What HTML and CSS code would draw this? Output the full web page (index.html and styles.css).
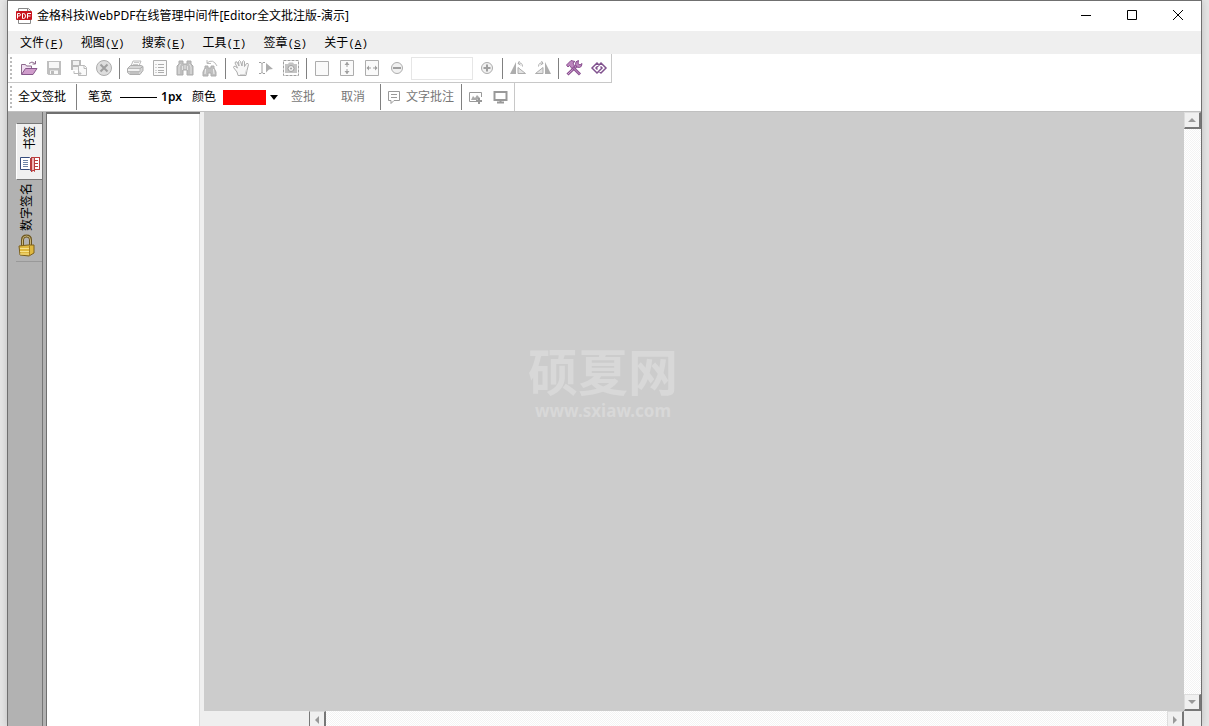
FILE: index.html
```html
<!DOCTYPE html>
<html lang="zh-CN">
<head>
<meta charset="utf-8">
<title>金格科技iWebPDF在线管理中间件</title>
<link rel="stylesheet" href="styles.css">
</head>
<body>
<div class="window">
  <header class="titlebar">
    <svg class="app-icon" viewBox="0 0 16 16"><path d="M2.500 .5h10l2 2v13h-12z" fill="#fff" stroke="#888"/><path d="M11.500.500v3h3" fill="#ddd" stroke="#888"/><rect x="0" y="3" width="16" height="9" rx="1" fill="#c8141e"/><path d="M1.500 10.500V5.500h1.500q1.500 0 1.500 1.250T3 8H1.500M6.500 5.500v5h1q2 0 2-2.500T7.500 5.500zM11.500 10.500v-5h3.500M11.500 8h3" fill="none" stroke="#fff"/></svg>
    <h1 class="title">金格科技iWebPDF在线管理中间件[Editor全文批注版-演示]</h1>
    <div class="caption">
      <button class="cap" aria-label="最小化"><svg viewBox="0 0 12 12"><path d="M1 5.500h10"/></svg></button>
      <button class="cap" aria-label="最大化"><svg viewBox="0 0 12 12"><path d="M1.500 .500h9v9h-9z"/></svg></button>
      <button class="cap" aria-label="关闭"><svg viewBox="0 0 12 12"><path d="M1 0l10 10M11 0L1 10"/></svg></button>
    </div>
  </header>

  <nav class="menubar">
    <button class="menu">文件<span class="key">(<u>F</u>)</span></button>
    <button class="menu">视图<span class="key">(<u>V</u>)</span></button>
    <button class="menu">搜索<span class="key">(<u>E</u>)</span></button>
    <button class="menu">工具<span class="key">(<u>T</u>)</span></button>
    <button class="menu">签章<span class="key">(<u>S</u>)</span></button>
    <button class="menu">关于<span class="key">(<u>A</u>)</span></button>
  </nav>

  <div class="toolbars">
    <div class="toolbar">
      <span class="grip"></span>
      <button class="tool" aria-label="打开"><svg viewBox="0 0 18 18"><path d="M1.500 15V5.500h4l1 1.500h5v2" fill="#f1dff1" stroke="#8c6a8c"/><path d="M1.500 15.500l4-6H17l-4 6z" fill="#cf9ccb" stroke="#86588a"/><path d="M9 4.500q3-3 6 0M15.500 2v3h-3" fill="none" stroke="#8c6a8c"/></svg></button>
      <button class="tool off" aria-label="保存"><svg viewBox="0 0 18 18"><path d="M2 2h14v14H3.500L2 14.500z" fill="#b0b0b0"/><path d="M4 3h10v6H4zM5 11.500h8V15H5z" fill="#f6f6f6"/><path d="M6 12h3v3H6z" fill="#aaa"/></svg></button>
      <button class="tool off" aria-label="另存为"><svg viewBox="0 0 18 18"><path d="M1 1h10v10H1z" fill="#aaa"/><path d="M3 2h6v4H3zM3 8h5v3H3z" fill="#eee"/><path d="M8.500 6.500h6l2 2v8h-8z" fill="#fafafa" stroke="#aaa"/><path d="M4 12v2.500h7M9 12.500l2 2-2 2M14 6.500v3h3" fill="none" stroke="#aaa"/></svg></button>
      <button class="tool off" aria-label="关闭文档"><svg viewBox="0 0 18 18"><circle cx="9" cy="9" r="7.500" fill="#d6d6d6" stroke="#999"/><path d="M5.500 5.500l7 7M12.500 5.500l-7 7" stroke="#888" stroke-width="2"/></svg></button>
      <span class="sep"></span>
      <button class="tool off" aria-label="打印"><svg viewBox="0 0 18 18"><path d="M5 7l2-5h8l-2 5z" fill="#fafafa" stroke="#aaa"/><path d="M8 3.500h5M7 5.500h5" stroke="#bbb"/><path d="M1.500 9.500l3-3h10.500l2 1v4l-3 4H4l-2.500-2z" fill="#ccc" stroke="#999"/><path d="M2 9.500h12v3H2" fill="#eee" stroke="#aaa"/><path d="M4 14h9M14 9.500l3-2" stroke="#999"/></svg></button>
      <button class="tool off" aria-label="文档属性"><svg viewBox="0 0 18 18"><path d="M2.500 1.500h13v15h-13z" fill="#fafafa" stroke="#999"/><path d="M7 5.500h6M7 8.500h6M7 11.500h6M7 13.500h6M4.500 5.500h1M4.500 8.500h1M4.500 11.500h1M4.500 13.500h1" stroke="#999"/></svg></button>
      <button class="tool off" aria-label="查找"><svg viewBox="0 0 18 18"><path d="M3 2h4v3h4V2h4v3l2 2v9h-6v-5H7v5H1V7l2-2z" fill="#b0b0b0" stroke="#999"/><path d="M4.500 5L3 8v7M13.500 5L15 8v7M9 6v4M6.500 7v4M11.500 7v4" fill="none" stroke="#ddd"/></svg></button>
      <button class="tool off" aria-label="查找下一个"><svg viewBox="0 0 18 18"><path d="M4 7h3v2h3V7h3v2l2 4v4h-5v-3H7v3H2v-4l2-4z" fill="#b0b0b0" stroke="#999"/><path d="M4.500 10L4 15M12.500 10l.5 5" stroke="#eee"/><path d="M6 4q6-5 10 3M6 1v3.500h4" fill="none" stroke="#aaa"/></svg></button>
      <span class="sep"></span>
      <button class="tool off" aria-label="手形工具"><svg viewBox="0 0 18 18"><path d="M6 16.500L5 13 1.500 8.500q0-2 2-1L5.500 9 3 4q.500-2 2-1l2 4L6.500 2.500q1-2 2 0L10 7l.500-4.500q1-1.500 2 0v5l2-3q2-.500 2 1l-1.500 6-1 5z" fill="#f6f6f6" stroke="#999"/><path d="M8 15.500h5l1.500-5" fill="none" stroke="#ccc"/></svg></button>
      <button class="tool off" aria-label="选择文本"><svg viewBox="0 0 18 18"><path d="M2 3.500h2l1 1 1-1h2M5 4v10M2 14.500h2l1-1 1 1h2" fill="none" stroke="#888"/><path d="M9 4l7 6-4 .500L9 13.500z" fill="#999"/></svg></button>
      <button class="tool off" aria-label="快照"><svg viewBox="0 0 18 18"><path d="M1.500 1.500h15v15h-15z" fill="none" stroke="#888" stroke-dasharray="3 1"/><path d="M3 5h3l1-1.500h4L12 5h3v9H3z" fill="#b6b6b6"/><circle cx="9" cy="9.500" r="3" fill="#eee" stroke="#888"/><circle cx="9" cy="9.500" r="1" fill="#888"/></svg></button>
      <span class="sep"></span>
      <button class="tool off" aria-label="实际大小"><svg viewBox="0 0 18 18"><path d="M2.500 2.500h13v14h-13z" fill="#fafafa" stroke="#999"/></svg></button>
      <button class="tool off" aria-label="适合高度"><svg viewBox="0 0 18 18"><path d="M2.500 1.500h13v15h-13z" fill="#fafafa" stroke="#999"/><path d="M9 3v5M9 10v5" stroke="#888"/><path d="M6.500 6L9 3l2.500 3zM6.500 12L9 15l2.500-3z" fill="#888"/></svg></button>
      <button class="tool off" aria-label="适合宽度"><svg viewBox="0 0 18 18"><path d="M2.500 1.500h13v15h-13z" fill="#fafafa" stroke="#999"/><path d="M4 9h4M10 9h4" stroke="#888"/><path d="M6 6.500L3.500 9 6 11.500zM12 6.500L14.500 9 12 11.500z" fill="#888"/></svg></button>
      <button class="tool off" aria-label="缩小"><svg viewBox="0 0 18 18"><circle cx="9" cy="9" r="5.500" fill="#eee" stroke="#999"/><path d="M5 9h8" stroke="#888" stroke-width="2"/></svg></button>
      <input class="zoom" type="text" aria-label="缩放比例" disabled>
      <button class="tool off" aria-label="放大"><svg viewBox="0 0 18 18"><circle cx="9" cy="9" r="5.500" fill="#eee" stroke="#999"/><path d="M5.500 9h7M9 5.500v7" stroke="#888" stroke-width="2"/></svg></button>
      <span class="sep"></span>
      <button class="tool off" aria-label="向左旋转"><svg viewBox="0 0 18 18"><path d="M7 3v12H1z" fill="#999"/><path d="M9 8.500v6h7.500z" fill="#ddd" stroke="#999"/><path d="M9 4.500q4-2 4.500 3M10.500 2L9 4.500l2.500 1.500" fill="none" stroke="#999"/></svg></button>
      <button class="tool off" aria-label="向右旋转"><svg viewBox="0 0 18 18"><path d="M11 3v12h6z" fill="#999"/><path d="M9 8.500v6H1.500z" fill="#ddd" stroke="#999"/><path d="M9 4.500q-4-2-4.500 3M7.500 2L9 4.500 6.500 6" fill="none" stroke="#999"/></svg></button>
      <span class="sep"></span>
      <button class="tool" aria-label="选项"><svg viewBox="0 0 18 18"><path d="M2.500 15.500L12 6.500" stroke="#8a5090" stroke-width="3"/><path d="M3 15l9-8.500" stroke="#d3a6d4"/><path d="M13.500 1.500q-3.500.500-3 4t4 3q2.500-.500 2.500-4l-2 1.500-2-1.500z" fill="#bd86be" stroke="#8a5090"/><path d="M7.500 8l7.500 7.500" stroke="#8a5090" stroke-width="3"/><path d="M8 8.500l6.500 6.500" stroke="#c795c8"/><path d="M1.500 6L6 1.500l4 1-2 1.500 1.500 3L7 9.500 4.500 6.500 3 8z" fill="#bd86be" stroke="#8a5090"/></svg></button>
      <button class="tool" aria-label="关于"><svg viewBox="0 0 18 18"><path d="M9.500 6.500L7 4 2 9l5 5 5-5-1.500-1.500M8.500 11.500L11 14l5-5-5-5-5 5 1.500 1.500" fill="none" stroke="#80528e" stroke-width="1.500"/></svg></button>
    </div>

    <div class="toolbar">
      <span class="grip"></span>
      <button class="text-tool full-sign">全文签批</button>
      <span class="sep"></span>
      <button class="text-tool pen"><span>笔宽</span><span class="pen-line"></span><b>1px</b></button>
      <button class="text-tool color"><span>颜色</span><span class="swatch"></span><span class="drop"></span></button>
      <button class="text-tool action" disabled>签批</button>
      <button class="text-tool action" disabled>取消</button>
      <span class="sep"></span>
      <button class="text-tool note" disabled><svg viewBox="0 0 14 14"><path d="M1.500 1.500h11v9H7l-3 3v-3H1.500z" fill="none" stroke="#999"/><path d="M4 4.500h6M4 7.500h6" stroke="#999"/></svg>文字批注</button>
      <span class="sep"></span>
      <button class="tool" aria-label="插入图片"><svg viewBox="0 0 18 18"><path d="M14.500 9V4.500h-12v9H9" fill="none" stroke="#999"/><path d="M4 12l2-4 2 2 2-3 3 3-3 2z" fill="#aaa"/><path d="M12 10v6M9 13h6" stroke="#999" stroke-width="2"/></svg></button>
      <button class="tool" aria-label="全屏"><svg viewBox="0 0 18 18"><path d="M2.500 4h12v8h-12z" fill="#fff" stroke="#999" stroke-width="2"/><path d="M8.500 12v3M5 14.500h7" stroke="#999" stroke-width="2"/></svg></button>
    </div>
  </div>

  <main class="workspace">
    <aside class="tabs">
      <button class="tab selected">
        <svg class="book" viewBox="0 0 20 18"><path d="M.500 2.500h9l1 1 1-1h8v12h-8l-1 1-1-1h-9z" fill="#fff" stroke="#354b7c"/><path d="M3 5.500h5M3 7.500h5M3 9.500h5M3 11.500h5" stroke="#6f86a8"/><path d="M10.500 3.500v11.500M15 5.500h3M15 8.500h3M15 11.500h3M19.500 2.500v12M11 2.500h9M11 14.500h9" stroke="#b93a3a"/><path d="M11.500 2.500h3v14L13 15l-1.500 2z" fill="#efb5b5" stroke="#b93a3a"/></svg>
        <span class="tab-label">书签</span>
      </button>
      <button class="tab">
        <svg class="lock" viewBox="0 0 18 24"><path d="M4.500 12V6q0-4 4-4t4 4v5" fill="none" stroke="#6b551e" stroke-width="3"/><path d="M4.500 12V6q0-4 4-4t4 4v5" fill="none" stroke="#c7b57a"/><path d="M1 12l9-1 6 0v8l-5 3-9-1z" fill="#dfb83f" stroke="#7d601b"/><path d="M2 14.500h9M2 17.500h9M2 20h9" stroke="#f6e28d"/><path d="M11.500 12v9.500" stroke="#a98023"/></svg>
        <span class="tab-label">数字签名</span>
      </button>
    </aside>
    <div class="divider"></div>
    <section class="bookmarks" aria-label="书签"></section>
    <div class="viewer">
      <section class="canvas">
        <div class="brand">硕夏网</div>
        <div class="site">www.sxiaw.com</div>
      </section>
      <div class="scroll vertical">
        <button class="arrow" aria-label="向上滚动"><svg viewBox="0 0 8 8"><path d="M0 6l4-4 4 4z"/></svg></button>
        <button class="arrow" aria-label="向下滚动"><svg viewBox="0 0 8 8"><path d="M0 2h8L4 6z"/></svg></button>
      </div>
      <div class="bottom">
        <div class="status"></div>
        <div class="scroll horizontal">
          <button class="arrow" aria-label="向左滚动"><svg viewBox="0 0 8 8"><path d="M6 0v8L2 4z"/></svg></button>
          <button class="arrow" aria-label="向右滚动"><svg viewBox="0 0 8 8"><path d="M2 0l4 4-4 4z"/></svg></button>
        </div>
      </div>
      <div class="corner"></div>
    </div>
  </main>
</div>
</body>
</html>
```
FILE: styles.css
```css
* { box-sizing: border-box; }

body {
  margin: 0;
  background: #e6e6e6;
  color: #000;
  font: 12px/16px "Noto Sans", "Noto Sans CJK SC", sans-serif;
}

button {
  margin: 0;
  padding: 0;
  border: 0;
  background: none;
  color: inherit;
  font: inherit;
}

svg { display: block; flex: none; }

.window {
  display: flex;
  flex-direction: column;
  height: 100vh;
  margin: 0 7px;
  border: 1px solid #707070;
  border-bottom: 0;
  background: #fff;
  box-shadow: 0 0 8px #bbb;
}

/* Title bar */
.titlebar {
  display: flex;
  align-items: center;
  height: 30px;
  padding-left: 8px;
}
.app-icon { width: 16px; height: 16px; }
.title {
  flex: 1;
  margin: 0;
  padding-left: 5px;
  font-size: 12px;
  font-weight: 400;
}
.caption { display: flex; }
.cap {
  display: grid;
  place-items: center;
  width: 46px;
  height: 30px;
}
.cap svg { width: 12px; height: 12px; fill: none; stroke: #000; }

/* Menu bar */
.menubar {
  display: flex;
  gap: 17px;
  height: 23px;
  padding-left: 12px;
  background: #efefef;
}
.menu { white-space: nowrap; font-family: "Noto Sans CJK SC", sans-serif; }
.key { font-family: "Liberation Mono", monospace; font-size: 11px; }

/* Toolbars */
.toolbars { border-bottom: 1px solid #c0c0c0; }
.toolbar {
  display: flex;
  align-items: center;
  width: fit-content;
  height: 28px;
  border-right: 1px solid #c8c8c8;
}
.toolbar:first-child { height: 29px; border-bottom: 1px solid #c8c8c8; }
.grip {
  width: 2px;
  height: 22px;
  margin: 0 4px 0 2px;
  background: repeating-linear-gradient(#bbb 0 2px, #fff 2px 4px);
}
.tool {
  display: grid;
  place-items: center;
  width: 25px;
  height: 26px;
}
.tool svg { width: 18px; height: 18px; }
.off svg { opacity: 0.8; }
.sep {
  width: 1px;
  height: 21px;
  margin: 0 2px 0 3px;
  background: #808080;
}
.zoom {
  width: 62px;
  height: 23px;
  margin: 0 1px 0 2px;
  border: 1px solid #e6e6e6;
  background: #fff;
}
.text-tool {
  display: flex;
  align-items: center;
  height: 26px;
  white-space: nowrap;
}
.text-tool:disabled { color: #777; }
.toolbar:last-child .sep { height: 26px; }
.full-sign { padding: 0 7px 0 2px; }
.pen { padding-left: 9px; }
.pen-line { width: 37px; height: 1px; margin: 0 4px 0 8px; background: #000; }
.pen b { font-weight: 600; }
.color { padding-left: 10px; }
.swatch { width: 43px; height: 15px; margin: 0 4px 0 7px; background: #f00; }
.drop { border: 4px solid transparent; border-top: 5px solid #000; border-bottom: 0; }
.action { padding: 0 13px; }
.action + .sep { margin-left: 2px; }
.note { gap: 5px; padding: 0 4px; }
.note svg { width: 14px; height: 14px; }

/* Sidebar */
.workspace { display: flex; flex: 1; min-height: 0; }
.tabs {
  display: flex;
  flex-direction: column;
  width: 35px;
  padding: 11px 0 0 8px;
  border-right: 1px solid #777;
  background: #b2b2b2;
}
.tab {
  display: flex;
  flex-direction: column-reverse;
  align-items: center;
  justify-content: space-between;
  height: 82px;
  padding: 3px 4px 3px 0;
  border-bottom: 1px solid #999;
}
.tab.selected {
  height: 57px;
  padding: 2px 0 6px;
  border: solid #777;
  border-width: 1px 0 1px 1px;
  border-left-color: #fff;
  background: #f0f0f0;
}
.tab-label {
  writing-mode: vertical-rl;
  text-orientation: sideways;
  transform: rotate(180deg);
}
.book { width: 20px; height: 18px; }
.lock { width: 18px; height: 24px; }
.divider { width: 3px; background: #b2b2b2; }
.bookmarks {
  width: 154px;
  border: solid #707070;
  border-width: 2px 0 0 1px;
  box-shadow: inset -1px 0 #ddd;
  background: #fff;
}

/* Document viewer */
.viewer {
  display: grid;
  flex: 1;
  grid-template: 1fr 15px / 1fr 17px;
  border-left: 4px solid #efefef;
}
.canvas {
  display: flex;
  flex-direction: column;
  align-items: center;
  justify-content: center;
  padding: 0 182px 64px 0;
  background: #ccc;
  color: #d8d8d8;
}
.brand { font: 700 50px/60px "Noto Sans CJK SC", sans-serif; }
.site { padding-top: 2px; font: 700 17px/20px "Noto Sans", sans-serif; }
.scroll {
  display: flex;
  justify-content: space-between;
  background: repeating-conic-gradient(#fff 0 25%, #f3f3f3 0 50%) 0 0 / 2px 2px;
}
.vertical { flex-direction: column; }
.arrow {
  display: grid;
  place-items: center;
  width: 17px;
  height: 17px;
  border: 1px solid #ddd;
  border-right: 2px solid #777;
  border-bottom: 2px solid #777;
  background: #f0f0f0;
}
.arrow svg { width: 8px; height: 8px; fill: #999; }
.horizontal .arrow { border-bottom: 0; }
.horizontal .arrow:first-child { border-left-color: #777; }
.bottom { display: flex; overflow: hidden; }
.status { width: 105px; background: #efefef; }
.horizontal { flex: 1; }
.corner { background: #efefef; }
```
